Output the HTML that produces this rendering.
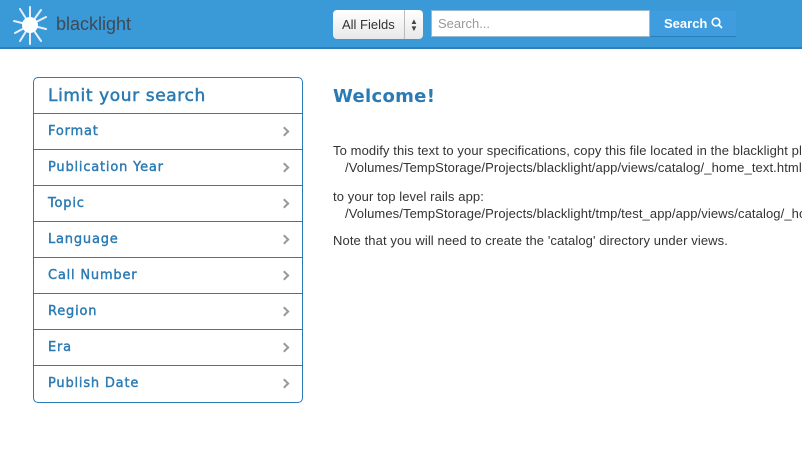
<!DOCTYPE html>
<html><head><style>
*{margin:0;padding:0;box-sizing:border-box}
body{width:802px;height:452px;overflow:hidden;background:#fff;font-family:"Liberation Sans",sans-serif;position:relative}
.wrap{position:absolute;left:0;top:0;width:802px;height:452px;overflow:hidden}
.hdr{position:absolute;left:0;top:0;width:802px;height:49px;background:#3a9ad8;border-bottom:2px solid #2c80b9}
.logo{position:absolute;left:56px;top:14px;font-size:18px;color:#3d4a56}
.sel{position:absolute;left:333px;top:10px;width:90px;height:29px;background:linear-gradient(#fff,#e8e8e8);border-radius:4px;font-size:13px;color:#333;line-height:29px;padding-left:9px}
.sel .ar{position:absolute;right:0;top:0;width:19px;height:29px;border-left:1px solid #bbb;font-size:8px;line-height:7px;text-align:center;padding-top:8px;color:#444}
.inp{position:absolute;left:431px;top:10px;width:219px;height:27px;background:#fff;border:1px solid #9bc;font-size:13px;color:#999;line-height:25px;padding-left:6px}
.btn{position:absolute;left:650px;top:11px;width:86px;height:26px;background:#3f9ddf;border-bottom:1px solid #2b7fb6;color:#fff;font-size:13px;font-weight:bold;line-height:25px;padding-left:14px}
.side{position:absolute;left:33px;top:77px;width:270px;height:326px;border:1px solid #2b7bb5;border-radius:5px;overflow:hidden}
.side h3{height:36px;font-weight:normal;-webkit-text-stroke:.5px #2a7ab3;color:#2a7ab3;padding-left:14px;line-height:37px;border-bottom:1px solid #2b7bb5;letter-spacing:.6px;font-family:"DejaVu Sans",sans-serif;font-size:17px}
.row{height:36px;border-bottom:1px solid #2b7bb5;font-family:"DejaVu Sans",sans-serif;-webkit-text-stroke:.4px #2a7ab3;font-size:13px;color:#2a7ab3;padding-left:14px;line-height:35px;position:relative;letter-spacing:.8px}
.row:last-child{border-bottom:none}
.row:after{content:"";position:absolute;right:14px;top:14px;width:5px;height:5px;border-top:2.5px solid #999;border-right:2.5px solid #999;transform:rotate(45deg)}
h1{position:absolute;left:333px;top:86px;font-size:18px;color:#2a7ab3;font-family:"DejaVu Sans",sans-serif;font-weight:bold;letter-spacing:.3px}
.t{position:absolute;left:333px;font-size:13px;color:#333;white-space:nowrap;letter-spacing:.1px}
</style></head><body><div class="wrap">
<div class="hdr">
<svg style="position:absolute;left:13px;top:5px" width="34" height="40" viewBox="0 0 34 40">
<g stroke="#e8f0ff" stroke-width="2" stroke-linecap="round" fill="none">
<path d="M17 20 L17 2"/><path d="M17 20 L28 5"/><path d="M17 20 L33 12"/><path d="M17 20 L33 24"/><path d="M17 20 L28 36"/><path d="M17 20 L17 39"/><path d="M17 20 L7 36"/><path d="M17 20 L2 28"/><path d="M17 20 L1 16"/><path d="M17 20 L7 4"/>
</g><circle cx="17" cy="20" r="8" fill="#fff"/></svg>
<div class="logo">blacklight</div>
<div class="sel">All Fields<div class="ar">▲<br>▼</div></div>
<div class="inp">Search...</div>
<div class="btn">Search <svg width="12" height="12" viewBox="0 0 12 12" style="vertical-align:-1px"><circle cx="5" cy="5" r="3.8" fill="none" stroke="#fff" stroke-width="1.6"/><path d="M7.8 7.8 L11 11" stroke="#fff" stroke-width="1.8"/></svg></div>
</div>
<div class="side"><h3>Limit your search</h3>
<div class="row">Format</div><div class="row">Publication Year</div><div class="row">Topic</div><div class="row">Language</div><div class="row">Call Number</div><div class="row">Region</div><div class="row">Era</div><div class="row">Publish Date</div>
</div>
<h1>Welcome!</h1>
<div class="t" style="top:143px">To modify this text to your specifications, copy this file located in the blacklight plugin:</div>
<div class="t" style="top:160px;left:345px">/Volumes/TempStorage/Projects/blacklight/app/views/catalog/_home_text.html.erb</div>
<div class="t" style="top:189px">to your top level rails app:</div>
<div class="t" style="top:206px;left:345px">/Volumes/TempStorage/Projects/blacklight/tmp/test_app/app/views/catalog/_home_text.html.erb</div>
<div class="t" style="top:233px">Note that you will need to create the 'catalog' directory under views.</div>
</div></body></html>
